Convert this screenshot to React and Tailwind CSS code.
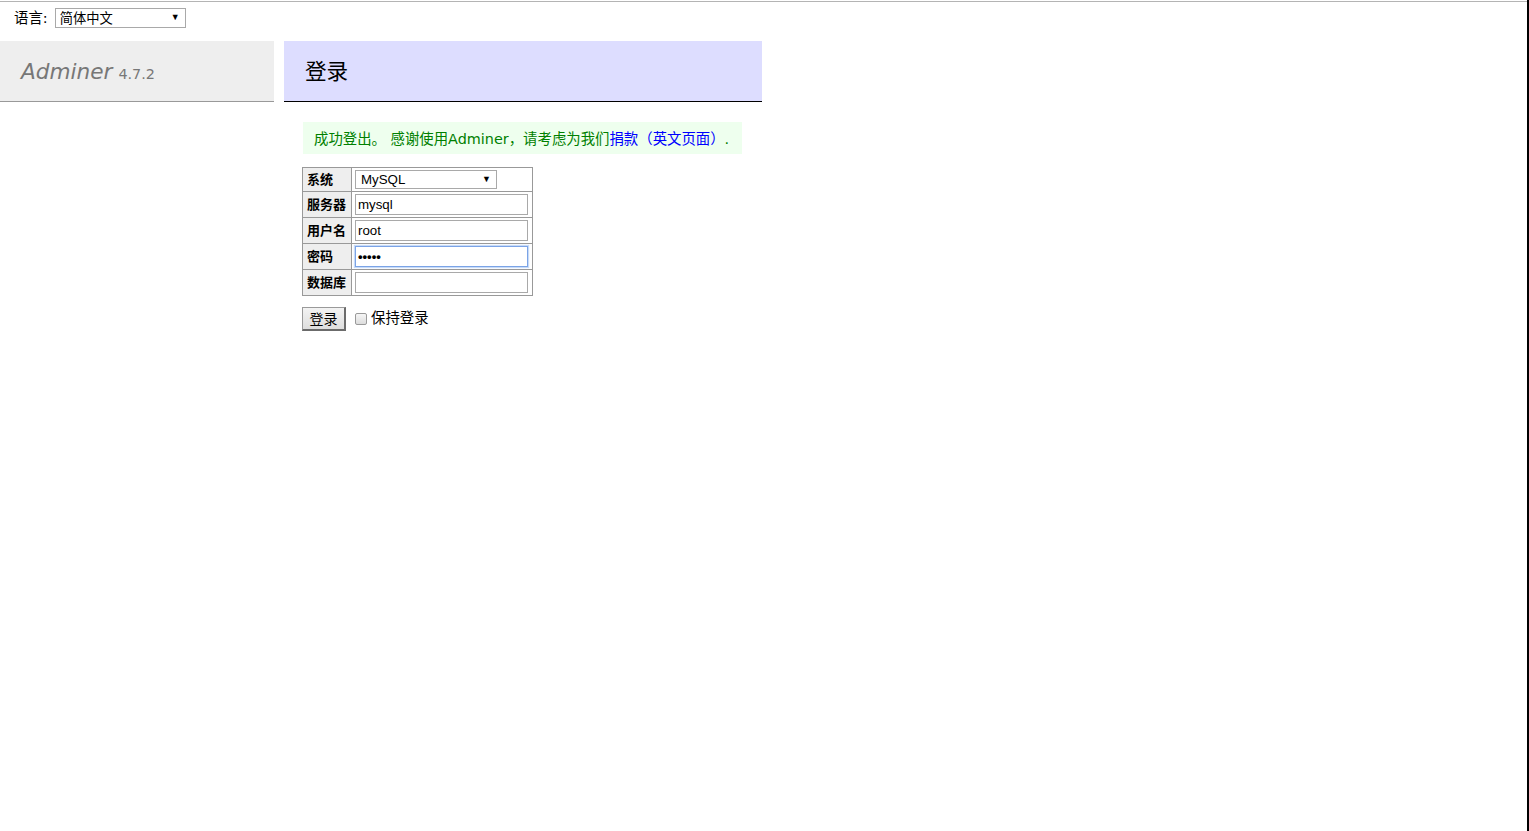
export default function App() {
  const inputFont = '[font-family:"Liberation_Sans","Noto_Sans_CJK_SC",sans-serif]';
  return (
    <div className='h-[831px] w-[1529px] overflow-hidden bg-white border-r-2 border-black [font-family:"DejaVu_Sans","Noto_Sans_CJK_SC",sans-serif] text-[14.4px] text-black'>
      <div className="mt-px border-t border-[#b4b4b4]">
        {/* language bar */}
        <div className="h-[39px] flex items-start pt-[6px] pl-[14px]">
          <div className="flex items-center h-[20px] leading-[19px]">
            <span className="text-[14.4px] mr-[7px]">语言:</span>
            <div className={`relative w-[131px] h-[20px] box-border border border-[#a9a9a9] bg-white flex items-center pl-[4px] text-[13.3px] ${inputFont}`}>
              <span className="leading-[18px] mt-[1px]">简体中文</span>
              <span className="absolute right-[5px] top-[1px] text-[9px] leading-[14px]">▼</span>
            </div>
          </div>
        </div>

        <div className="flex items-start">
          {/* menu */}
          <div className="w-[274px] h-[61px] bg-[#eeeeee] border-b border-[#999] box-border pl-[21px] pt-[17px]">
            <span className="italic text-[21.6px] text-[#777] leading-[28px]">Adminer</span>
            <span className="text-[14.4px] text-[#777] ml-[6px]">4.7.2</span>
          </div>

          {/* content */}
          <div className="ml-[10px] w-[478px]">
            <div className="h-[61px] bg-[#ddddff] border-b border-black box-border pl-[21px] pt-[17px]">
              <span className="text-[21.6px] leading-[28px]">登录</span>
            </div>

            <div className="pl-[18px] pr-[20px]">
              <div className="mt-[20px] ml-px h-[32px] bg-[#eeffee] text-[#008000] pl-[11px] pt-[1px] flex items-center leading-[18px] whitespace-nowrap">
                <span>成功登出。 感谢使用Adminer，请考虑为我们</span>
                <span className="text-[#0000ff]">捐款（英文页面）</span>
                <span>.</span>
              </div>

              {/* form table */}
              <div className="mt-[13px] w-[231px] border-t border-l border-[#999] grid grid-cols-[49px_181px] text-[13px]">
                {[
                  ['系统', 'select', 'MySQL'],
                  ['服务器', 'text', 'mysql'],
                  ['用户名', 'text', 'root'],
                  ['密码', 'password', '•••••'],
                  ['数据库', 'text', ''],
                ].map(([label, kind, val], i) => (
                  <Row key={label} label={label} kind={kind} val={val} first={i === 0} inputFont={inputFont} />
                ))}
              </div>

              {/* submit */}
              <div className="mt-[11px] flex items-center">
                <div className="w-[44px] h-[24px] box-border border border-[#9a9a9a] border-r-[2px] border-b-[2px] border-r-[#6b6b6b] border-b-[#6b6b6b] bg-gradient-to-b from-[#f3f3f3] to-[#dedede] flex items-center justify-center text-[14px] leading-[20px]">
                  登录
                </div>
                <div className="ml-[9px] w-[12px] h-[12px] rounded-[2px] border border-[#9a9a9a] bg-gradient-to-b from-[#f6f6f6] to-[#dddddd] mt-[-1px]" />
                <span className="ml-[4px] text-[14.4px] leading-[18px] mb-[2px]">保持登录</span>
              </div>
            </div>
          </div>
        </div>
      </div>
    </div>
  );
}

function Row({ label, kind, val, first, inputFont }) {
  const h = first ? 'h-[24px]' : 'h-[26px]';
  return (
    <>
      <div className={`${h} box-border border-r border-b border-[#999] bg-[#eeeeee] font-bold pl-[4px] flex items-center leading-[16px]`}>
        {label}
      </div>
      <div className={`${h} box-border border-r border-b border-[#999] pl-[3px] flex items-center`}>
        {kind === 'select' ? (
          <div className={`relative w-[142px] h-[19px] box-border border border-[#a9a9a9] bg-white flex items-center pl-[5px] text-[13.3px] ${inputFont}`}>
            <span className="leading-[16px]">{val}</span>
            <span className="absolute right-[5px] top-[1px] text-[9px] leading-[14px]">▼</span>
          </div>
        ) : (
          <div
            className={`w-[173px] h-[21px] box-border border ${
              kind === 'password' ? 'border-[#7ba3e6] shadow-[0_0_1px_1px_#c7dbf7]' : 'border-[#a9a9a9]'
            } bg-white flex items-center pl-[2px] text-[13.3px] ${inputFont}`}
          >
            <span className={kind === 'password' ? 'text-[13px] font-bold tracking-[0px] leading-[16px]' : 'leading-[16px]'}>{val}</span>
          </div>
        )}
      </div>
    </>
  );
}
